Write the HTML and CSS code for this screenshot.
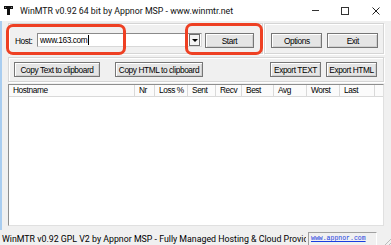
FILE: index.html
```html
<!DOCTYPE html>
<html lang="en">
<head>
	<meta charset="UTF-8">
	<title>WinMTR</title>
	<link rel="stylesheet" href="styles.css">
</head>
<body>
	<div class="titlebar">
		<svg class="app-icon" viewBox="0 0 9 9" width="9" height="9">
			<rect x="0" y="0" width="9" height="3" fill="#111"/>
			<rect x="3" y="3" width="3" height="6" fill="#111"/>
			<rect x="1" y="1" width="1" height="1" fill="#888"/>
			<rect x="7" y="1" width="1" height="1" fill="#888"/>
		</svg>
		<span class="title">WinMTR v0.92 64 bit by Appnor MSP - www.winmtr.net</span>
		<div class="win-ctrls">
			<div class="win-ctrl"><span class="ico-min"></span></div>
			<div class="win-ctrl"><span class="ico-max"></span></div>
			<div class="win-ctrl">
				<svg viewBox="0 0 8 8" width="8" height="8"><path d="M0.5 0.5 L7.5 7.5 M7.5 0.5 L0.5 7.5" stroke="#222" stroke-width="1" fill="none"/></svg>
			</div>
		</div>
	</div>

	<div class="client">
		<div class="row-top">
			<div class="group host-box">
				<span class="host-label">Host:</span>
				<div class="combo">
					<span class="combo-text">www.163.com</span><span class="caret"></span>
					<span class="combo-drop"><span class="arrow"></span></span>
				</div>
				<button class="btn btn-start">Start</button>
			</div>
			<div class="group actions-box">
				<button class="btn btn-wide">Options</button>
				<button class="btn btn-wide">Exit</button>
			</div>
		</div>

		<div class="group copy-box">
			<button class="btn btn-copy-text">Copy Text to clipboard</button>
			<button class="btn btn-copy-html">Copy HTML to clipboard</button>
			<button class="btn btn-wide btn-export">Export TEXT</button>
			<button class="btn btn-wide">Export HTML</button>
		</div>

		<div class="list-row">
			<div class="list">
				<div class="list-head">
					<span class="col c-host">Hostname</span>
					<span class="col c-nr">Nr</span>
					<span class="col c-loss">Loss %</span>
					<span class="col c-sent">Sent</span>
					<span class="col c-recv">Recv</span>
					<span class="col c-best">Best</span>
					<span class="col c-avg">Avg</span>
					<span class="col c-worst">Worst</span>
					<span class="col c-last">Last</span>
					<span class="col c-fill"></span>
				</div>
			</div>
			<div class="dots"></div>
		</div>
	</div>

	<div class="statusbar">
		<span class="status-text">WinMTR v0.92 GPL V2 by Appnor MSP - Fully Managed Hosting &amp; Cloud Provider</span>
		<span class="status-link"><a href="#">www.appnor.com</a></span>
		<span class="grip"></span>
	</div>

	<div class="mark mark-host"></div>
	<div class="mark mark-start"></div>
</body>
</html>
```

FILE: styles.css
```css
body {
	margin: 0;
	width: 391px;
	height: 245px;
	overflow: hidden;
	position: relative;
	background: #f0f0f0;
	font-family: "Liberation Sans", Arial, sans-serif;
	font-size: 8.3px;
	letter-spacing: -0.4px;
	color: #000;
}

.titlebar {
	height: 21px;
	background: #fff;
	display: flex;
	align-items: center;
}

.app-icon {
	margin-left: 4px;
}

.title {
	margin-left: 7px;
	font-family: Roboto, sans-serif;
	font-size: 8.8px;
	letter-spacing: 0;
	color: #111;
	white-space: nowrap;
}

.win-ctrls {
	margin-left: auto;
	display: flex;
}

.win-ctrl {
	width: 30px;
	height: 21px;
	display: flex;
	align-items: center;
	justify-content: center;
}

.win-ctrl:last-child {
	width: 31px;
}

.ico-min {
	width: 7px;
	height: 1px;
	background: #333;
}

.ico-max {
	width: 6px;
	height: 6px;
	border: 1px solid #333;
}

.client {
	height: 207px;
	border-left: 2px solid #a9cdf0;
	padding: 2px 0 0 6px;
}

.group {
	border: 1px solid #d5d5d5;
	box-shadow: inset 1px 1px #fff, 1px 1px #fff;
	box-sizing: border-box;
	display: flex;
	align-items: flex-start;
}

.row-top {
	display: flex;
	gap: 1px;
	width: 376px;
}

.host-box {
	width: 256px;
	height: 31px;
	padding: 9px 0 0 6px;
}

.host-label {
	margin-top: 3px;
	width: 22px;
}

.combo {
	width: 165px;
	height: 14px;
	box-sizing: border-box;
	border: 1px solid #8a8a8a;
	border-right-color: #d8d8d8;
	border-bottom-color: #d8d8d8;
	background: #fff;
	display: flex;
	align-items: center;
}

.combo-text {
	padding-left: 2px;
}

.caret {
	width: 1px;
	height: 10px;
	background: #000;
	margin-left: 1px;
}

.combo-drop {
	margin-left: auto;
	margin-right: 1px;
	width: 9px;
	height: 10px;
	border: 1px solid #6d6d6d;
	background: #f4f4f4;
	display: flex;
	align-items: center;
	justify-content: center;
}

.arrow {
	width: 0;
	height: 0;
	border-left: 3px solid transparent;
	border-right: 3px solid transparent;
	border-top: 3px solid #000;
}

.btn {
	height: 15px;
	box-sizing: border-box;
	padding: 0;
	border: 1px solid #767676;
	box-shadow: inset 1px 1px #fff, inset -1px -1px #d0d0d0;
	background: #e5e5e5;
	font-family: "Liberation Sans", Arial, sans-serif;
	font-size: 8.3px;
	letter-spacing: -0.4px;
	white-space: nowrap;
	color: #000;
}

.btn-start {
	margin-left: 3px;
	width: 49px;
}

.actions-box {
	width: 120px;
	height: 31px;
	padding: 9px 0 0 6px;
	gap: 5px;
}

.btn-wide {
	width: 51px;
}

.copy-box {
	width: 376px;
	height: 25px;
	margin-top: 3px;
	padding: 4px 6px 0 5px;
	gap: 5px;
}

.btn-copy-text {
	width: 86px;
}

.btn-copy-html {
	margin-left: 10px;
	width: 88px;
}

.btn-export {
	margin-left: auto;
}

.list-row {
	display: flex;
	margin-top: 2px;
}

.list {
	width: 376px;
	height: 142px;
	box-sizing: border-box;
	border: 1px solid #8e8e8e;
	border-right-color: #e0e0e0;
	border-bottom-color: #e0e0e0;
	background: #fff;
}

.list-head {
	display: flex;
	height: 11px;
	border-bottom: 1px solid #d9d9d9;
	background: #fbfbfb;
}

.col {
	box-sizing: border-box;
	border-right: 1px solid #d9d9d9;
	padding-left: 4px;
	line-height: 11px;
	white-space: nowrap;
}

.c-host { width: 126px; }
.c-nr { width: 20px; }
.c-loss { width: 33px; }
.c-sent { width: 28px; }
.c-recv { width: 26px; }
.c-best { width: 32px; }
.c-avg { width: 33px; }
.c-worst { width: 33px; }
.c-last { width: 35px; }
.c-fill { flex: 1; border-right: none; }

.dots {
	width: 7px;
	height: 144px;
	background-image: radial-gradient(#d4d4d4 35%, transparent 40%);
	background-size: 2px 2px;
}

.statusbar {
	height: 17px;
	display: flex;
	align-items: center;
}

.status-text {
	width: 306px;
	padding-left: 2px;
	box-sizing: border-box;
	overflow: hidden;
	white-space: nowrap;
	font-family: Roboto, sans-serif;
	font-size: 8.8px;
	letter-spacing: 0;
	color: #000;
}

.status-link {
	margin-left: 2px;
	width: 69px;
	height: 14px;
	box-sizing: border-box;
	border: 1px solid #a0a0a0;
	border-right-color: #fff;
	border-bottom-color: #fff;
	display: flex;
	align-items: center;
	padding-left: 2px;
}

.status-link a {
	font-family: "Liberation Mono", monospace;
	font-size: 6.5px;
	letter-spacing: 0;
	color: #1a3ee0;
}

.grip {
	margin-left: auto;
	width: 8px;
	height: 8px;
	align-self: flex-end;
	background: linear-gradient(135deg, transparent 45%, #bbb 45%, #bbb 55%, transparent 55%, transparent 70%, #bbb 70%, #bbb 80%, transparent 80%);
}

.mark {
	position: absolute;
	box-sizing: border-box;
	border: 3px solid #ee4023;
	border-radius: 7px;
}

.mark-host {
	left: 6px;
	top: 24px;
	width: 120px;
	height: 31px;
}

.mark-start {
	left: 185px;
	top: 23px;
	width: 78px;
	height: 32px;
}
```
